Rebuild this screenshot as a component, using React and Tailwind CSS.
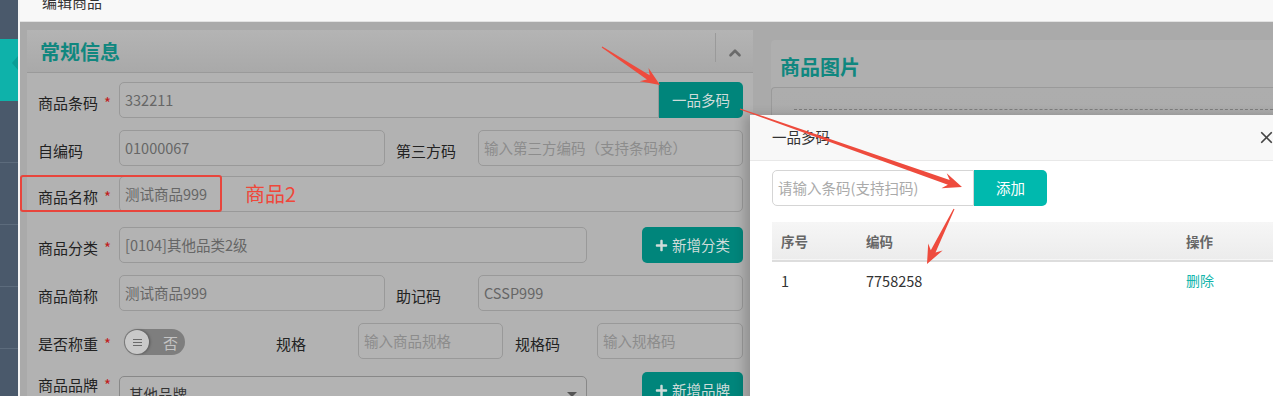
import { ChevronUp, X } from 'lucide-react';
import { FaPlus } from 'react-icons/fa';

const font = "font-['Noto_Sans_CJK_SC',sans-serif]";

// red annotation arrow, tapered shaft + swept head
const arrowPoints = (x1, y1, x2, y2) => {
  const dx = x2 - x1;
  const dy = y2 - y1;
  const len = Math.hypot(dx, dy);
  const ux = dx / len;
  const uy = dy / len;
  const nx = -uy;
  const ny = ux;
  const wingBack = 19;
  const neckBack = 14;
  const hw = 8;
  const sw = 2.6;
  const tw = 0.6;
  const wx = x2 - ux * wingBack;
  const wy = y2 - uy * wingBack;
  const kx = x2 - ux * neckBack;
  const ky = y2 - uy * neckBack;
  return [
    [x1 + nx * tw, y1 + ny * tw],
    [kx + nx * sw, ky + ny * sw],
    [wx + nx * hw, wy + ny * hw],
    [x2, y2],
    [wx - nx * hw, wy - ny * hw],
    [kx - nx * sw, ky - ny * sw],
    [x1 - nx * tw, y1 - ny * tw],
  ]
    .map((p) => p.map((v) => v.toFixed(1)).join(','))
    .join(' ');
};

const Label = ({ children, required, className = 'w-[81px]' }) => (
  <div className={`${className} shrink-0 flex items-center pt-[5px] text-[15px] leading-none text-[#222]`}>
    {children}
    {required && <span className="ml-[6px] text-[#c01c1c]">*</span>}
  </div>
);

const Field = ({ value, placeholder, className }) => (
  <div className={`h-[36px] shrink-0 border border-[#999] bg-[#b3b3b3] flex items-center px-[5px] text-[14.5px] leading-none ${className}`}>
    {value ? <span className="text-[#666]">{value}</span> : <span className="text-[#8c8c8c]">{placeholder}</span>}
  </div>
);

const TealButton = ({ children, className }) => (
  <button className={`h-[36px] shrink-0 bg-[#00857b] text-[#cfdcda] text-[14.5px] leading-none flex items-center justify-center gap-[4px] ${className}`}>
    {children}
  </button>
);

export default function App() {
  return (
    <div className={`relative w-[1273px] h-[396px] overflow-hidden flex ${font}`}>
      {/* sidebar */}
      <aside className="w-[18px] shrink-0 bg-[#4a596b] flex flex-col">
        <div className="h-[39px]" />
        <div className="h-[62px] bg-[#0eb2aa] relative">
          <div className="absolute left-[12px] top-[17px] w-0 h-0 border-y-[7px] border-y-transparent border-r-[6px] border-r-[#0a9d96]" />
        </div>
        <div className="h-[62px] border-b border-[#5c6b7c]" />
        <div className="h-[62px] border-b border-[#5c6b7c]" />
        <div className="h-[62px] border-b border-[#5c6b7c]" />
        <div className="h-[62px] border-b border-[#5c6b7c]" />
      </aside>
      <div className="w-[2px] shrink-0 bg-[#f4f4f4]" />

      <main className="flex-1 flex flex-col min-w-0">
        <header className="h-[22px] shrink-0 bg-[#f8f8f8] pl-[22px] overflow-hidden border-b border-[#e2e2e2]">
          <div className="-mt-[8px] text-[15px] leading-[20px] text-[#333]">编辑商品</div>
        </header>

        <div className="flex-1 bg-[#aaaaaa] flex items-start pl-[7px] pt-[8px] gap-[18px]">
          {/* general info panel */}
          <section className="w-[726px] shrink-0 h-[380px] bg-[#b2b2b2] rounded-t-[3px]">
            <div className="h-[43px] border-b border-[#9a9a9a] bg-gradient-to-b from-[#b4b4b4] to-[#a9a9a9] flex items-center pl-[13px]">
              <h2 className="flex-1 pt-[2px] text-[20px] font-bold text-[#10877f] leading-none">常规信息</h2>
              <div className="w-px h-[29px] bg-[#9a9a9a] -mt-[8px]" />
              <div className="w-[37px] flex justify-center pt-[3px]">
                <ChevronUp size={18} strokeWidth={3.5} className="text-[#6a6a6a]" />
              </div>
            </div>

            <div className="pl-[11px] pr-[9px]">
              <div className="flex mt-[9px]">
                <Label required>商品条码</Label>
                <Field value="332211" className="w-[540px] rounded-l-[5px]" />
                <TealButton className="w-[84px] rounded-r-[5px]">一品多码</TealButton>
              </div>

              <div className="flex mt-[12px]">
                <Label>自编码</Label>
                <Field value="01000067" className="w-[266px] rounded-[5px]" />
                <Label className="w-[82px] ml-[11px]">第三方码</Label>
                <Field placeholder="输入第三方编码（支持条码枪）" className="w-[265px] rounded-[5px]" />
              </div>

              <div className="flex mt-[10px]">
                <Label required>商品名称</Label>
                <Field value="测试商品999" className="w-[624px] rounded-[5px]" />
              </div>

              <div className="flex mt-[15px]">
                <Label required>商品分类</Label>
                <Field value="[0104]其他品类2级" className="w-[468px] rounded-[5px]" />
                <TealButton className="w-[101px] ml-[55px] rounded-[5px]">
                  <FaPlus size={13} />
                  新增分类
                </TealButton>
              </div>

              <div className="flex mt-[12px]">
                <Label>商品简称</Label>
                <Field value="测试商品999" className="w-[266px] rounded-[5px]" />
                <Label className="w-[82px] ml-[11px]">助记码</Label>
                <Field value="CSSP999" className="w-[265px] rounded-[5px]" />
              </div>

              <div className="flex mt-[12px]">
                <Label required>是否称重</Label>
                <div className="w-[61px] shrink-0 ml-[5px] self-center mt-[2px] h-[26px] rounded-full bg-[#7e7e7e] flex items-center pl-[1px]">
                  <div className="w-[24px] h-[24px] rounded-full bg-[#c9c9c9] shadow-[1px_0_3px_rgba(0,0,0,0.35)] flex flex-col items-center justify-center gap-[2px]">
                    <div className="w-[9px] h-px bg-[#6a6a6a]" />
                    <div className="w-[9px] h-px bg-[#6a6a6a]" />
                    <div className="w-[9px] h-px bg-[#6a6a6a]" />
                  </div>
                  <span className="ml-[14px] text-[15px] leading-none text-[#c4c4c4]">否</span>
                </div>
                <Label className="w-[82px] ml-[91px]">规格</Label>
                <Field placeholder="输入商品规格" className="w-[145px] rounded-[5px]" />
                <Label className="w-[82px] ml-[12px]">规格码</Label>
                <Field placeholder="输入规格码" className="w-[146px] rounded-[5px]" />
              </div>

              <div className="flex items-start mt-[13px]">
                <Label required>商品品牌</Label>
                <div className="w-[468px] shrink-0 mt-[4px] h-[36px] border border-[#888] bg-[#b3b3b3] rounded-[5px] flex items-center justify-between pl-[9px] pr-[9px] text-[14.5px] leading-none text-[#333]">
                  其他品牌
                  <span className="w-0 h-0 border-x-[5px] border-x-transparent border-t-[5px] border-t-[#555]" />
                </div>
                <TealButton className="w-[101px] ml-[55px] rounded-[5px]">
                  <FaPlus size={13} />
                  新增品牌
                </TealButton>
              </div>
            </div>
          </section>

          {/* picture panel */}
          <section className="flex-1 mt-[10px] h-[380px] bg-[#afafaf] rounded-tl-[4px]">
            <div className="h-[47px] pt-[17px] pl-[9px]">
              <h2 className="text-[20px] font-bold text-[#10877f] leading-none">商品图片</h2>
            </div>
            <div className="h-[300px] border-t border-l border-[#9a9a9a] rounded-tl-[4px] bg-gradient-to-b from-[#adadad] to-[#a6a6a6] pt-[21px] pl-[22px]">
              <div className="border-t border-dashed border-[#7d7d7d]" />
            </div>
          </section>
        </div>
      </main>

      {/* 一品多码 popup */}
      <div className="absolute left-[750px] top-[115px] w-[540px] h-[300px] bg-white shadow-[-6px_0_10px_rgba(0,0,0,0.18)]">
        <div className="h-[46px] bg-[#f8f8f8] border-b border-[#e8e8e8] flex items-center pl-[22px] pr-[14px]">
          <span className="flex-1 text-[14.5px] leading-none text-[#333]">一品多码</span>
          <X size={19} strokeWidth={2.2} className="text-[#444]" />
        </div>
        <div className="pl-[22px] pt-[9px]">
          <div className="flex">
            <div className="w-[202px] h-[36px] border border-[#d5d5d5] rounded-l-[5px] flex items-center px-[5px] text-[14.5px] leading-none text-[#aaa]">
              请输入条码(支持扫码)
            </div>
            <button className="w-[73px] h-[36px] bg-[#00b9ae] rounded-r-[5px] text-white text-[14.5px] leading-none">添加</button>
          </div>

          <table className="mt-[16px] w-[520px] text-left border-collapse">
            <thead>
              <tr className="h-[39px] bg-gradient-to-b from-[#f6f6f6] to-[#ececec] border-b-2 border-[#dddddd]">
                <th className="w-[85px] pl-[9px] text-[13.5px] font-semibold text-[#666]">序号</th>
                <th className="w-[320px] pl-[9px] text-[13.5px] font-semibold text-[#666]">编码</th>
                <th className="pl-[9px] text-[13.5px] font-semibold text-[#666]">操作</th>
              </tr>
            </thead>
            <tbody>
              <tr className="h-[38px]">
                <td className="pl-[9px] text-[14.5px] text-[#333]">1</td>
                <td className="pl-[9px] text-[14.5px] text-[#333]">7758258</td>
                <td className="pl-[9px] text-[14px] text-[#13b5ab]">删除</td>
              </tr>
            </tbody>
          </table>
        </div>
      </div>

      {/* annotations */}
      <div className="absolute left-[20px] top-[175px] w-[202px] h-[37px] border-2 border-[#e8453c] rounded-[3px]" />
      <div className="absolute left-[245px] top-[180px] text-[20px] leading-[28px] text-[#ef473a]">商品2</div>
      <svg className="absolute inset-0 pointer-events-none" width="1273" height="396">
        <polygon points={arrowPoints(602, 47, 660, 85)} fill="#ee4b3d" />
        <polygon points={arrowPoints(740, 109, 962, 187)} fill="#ee4b3d" />
        <polygon points={arrowPoints(954, 209, 927, 264)} fill="#ee4b3d" />
      </svg>
    </div>
  );
}
